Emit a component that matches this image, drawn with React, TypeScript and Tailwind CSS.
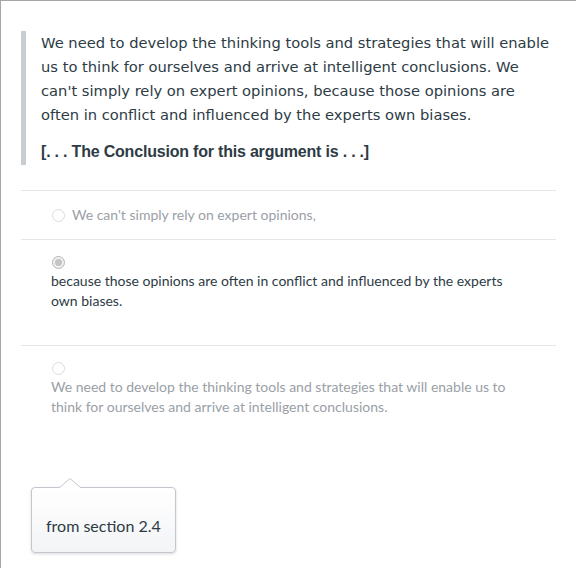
const options = [
  { id: "a", text: "We can't simply rely on expert opinions,", state: "off", inline: true },
  {
    id: "b",
    text: "because those opinions are often in conflict and influenced by the experts own biases.",
    state: "on",
    inline: false,
  },
  {
    id: "c",
    text: "We need to develop the thinking tools and strategies that will enable us to think for ourselves and arrive at intelligent conclusions.",
    state: "off",
    inline: false,
  },
];

function Radio({ checked }: { checked: boolean }) {
  return (
    <span
      className={
        "flex h-[13px] w-[13px] shrink-0 items-center justify-center rounded-full border " +
        (checked ? "border-[#b5b5b5] bg-[#f0f0f0]" : "border-[#dcdcdc] bg-white")
      }
    >
      {checked && <span className="h-[7px] w-[7px] rounded-full bg-[#c4c4c4]" />}
    </span>
  );
}

export default function App() {
  return (
    <div className="min-h-[568px] border-l border-t border-[#a6a6a6] bg-white pl-[20px] pr-[20px] pt-[30px]">
      <blockquote className="border-l-[5px] border-[#c7cdd1] pl-[15px] pb-[3px]">
        <p className="pr-[4px] text-[14.7px] leading-6 text-[#2d3b45]" style={{ fontFamily: "'DejaVu Sans', Verdana, sans-serif" }}>
          We need to develop the thinking tools and strategies that will enable us to think for ourselves and arrive
          at intelligent conclusions. We can't simply rely on expert opinions, because those opinions are often in
          conflict and influenced by the experts own biases.
        </p>
        <p
          className="mt-[15px] text-[16px] font-bold leading-5 tracking-[-0.2px] text-[#2d3b45]"
          style={{ fontFamily: "'Liberation Sans', Arial, sans-serif" }}
        >
          [. . . The Conclusion for this argument is . . .]
        </p>
      </blockquote>

      <div className="mt-[25px] font-['Lato',sans-serif] text-[14px]">
        {options.map((o, i) => (
          <div
            key={o.id}
            className={
              "border-t border-[#e6e6e6] pl-[31px] pr-[30px] " +
              (i === 0 ? "flex h-[49px] items-center gap-[7px] text-[#9aa0a6]" : "") +
              (i === 1 ? "h-[106px] pt-[16px] text-[#2d3b45]" : "") +
              (i === 2 ? "pt-[16px] text-[#9aa0a6]" : "")
            }
          >
            {o.inline ? (
              <>
                <Radio checked={false} />
                <span className="leading-5">{o.text}</span>
              </>
            ) : (
              <>
                <Radio checked={o.state === "on"} />
                <p className="-ml-px mt-[2px] leading-5">{o.text}</p>
              </>
            )}
          </div>
        ))}
      </div>

      <div className="mt-[70px] ml-[10px] relative w-[145px]">
        <svg className="absolute left-[28px] top-[-9px]" width="22" height="10" viewBox="0 0 22 10">
          <path d="M0 10 L11 0.5 L22 10" fill="#ffffff" stroke="#c3c8cf" strokeWidth="1" />
        </svg>
        <div className="flex h-[66px] items-center rounded-[4px] border border-[#c3c8cf] bg-gradient-to-b from-white to-[#f3f4f6] px-[14px] pt-[11px] font-['Lato',sans-serif] text-[16px] text-[#2d3b45] shadow-[0_1px_3px_rgba(0,0,0,0.15)]">
          from section 2.4
        </div>
      </div>
    </div>
  );
}
